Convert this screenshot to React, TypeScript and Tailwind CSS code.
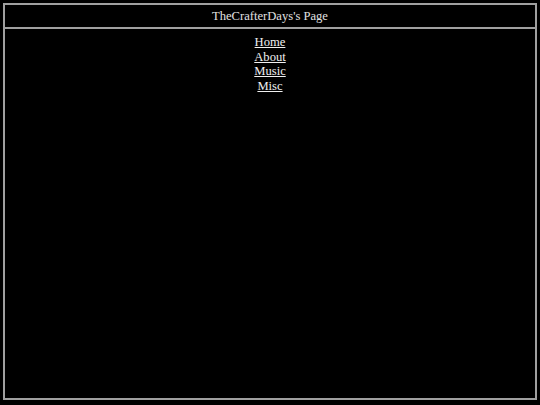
export default function App() {
  const links = ['Home', 'About', 'Music', 'Misc'];

  return (
    <div className="h-[405px] w-[540px] bg-black p-[3px] font-['Liberation_Serif',serif] text-[12.6px] leading-[14.5px]">
      <div className="flex h-[397px] flex-col border-2 border-[#a0a0a0]">
        <div className="flex h-[24px] items-center justify-center border-b-2 border-[#a0a0a0] text-[#e0e0e0]">
          TheCrafterDays&apos;s Page
        </div>
        <nav className="flex flex-col items-center pt-[6px]">
          {links.map((l) => (
            <a key={l} href="#" className="text-[#f0f0f0] underline">
              {l}
            </a>
          ))}
        </nav>
      </div>
    </div>
  );
}
